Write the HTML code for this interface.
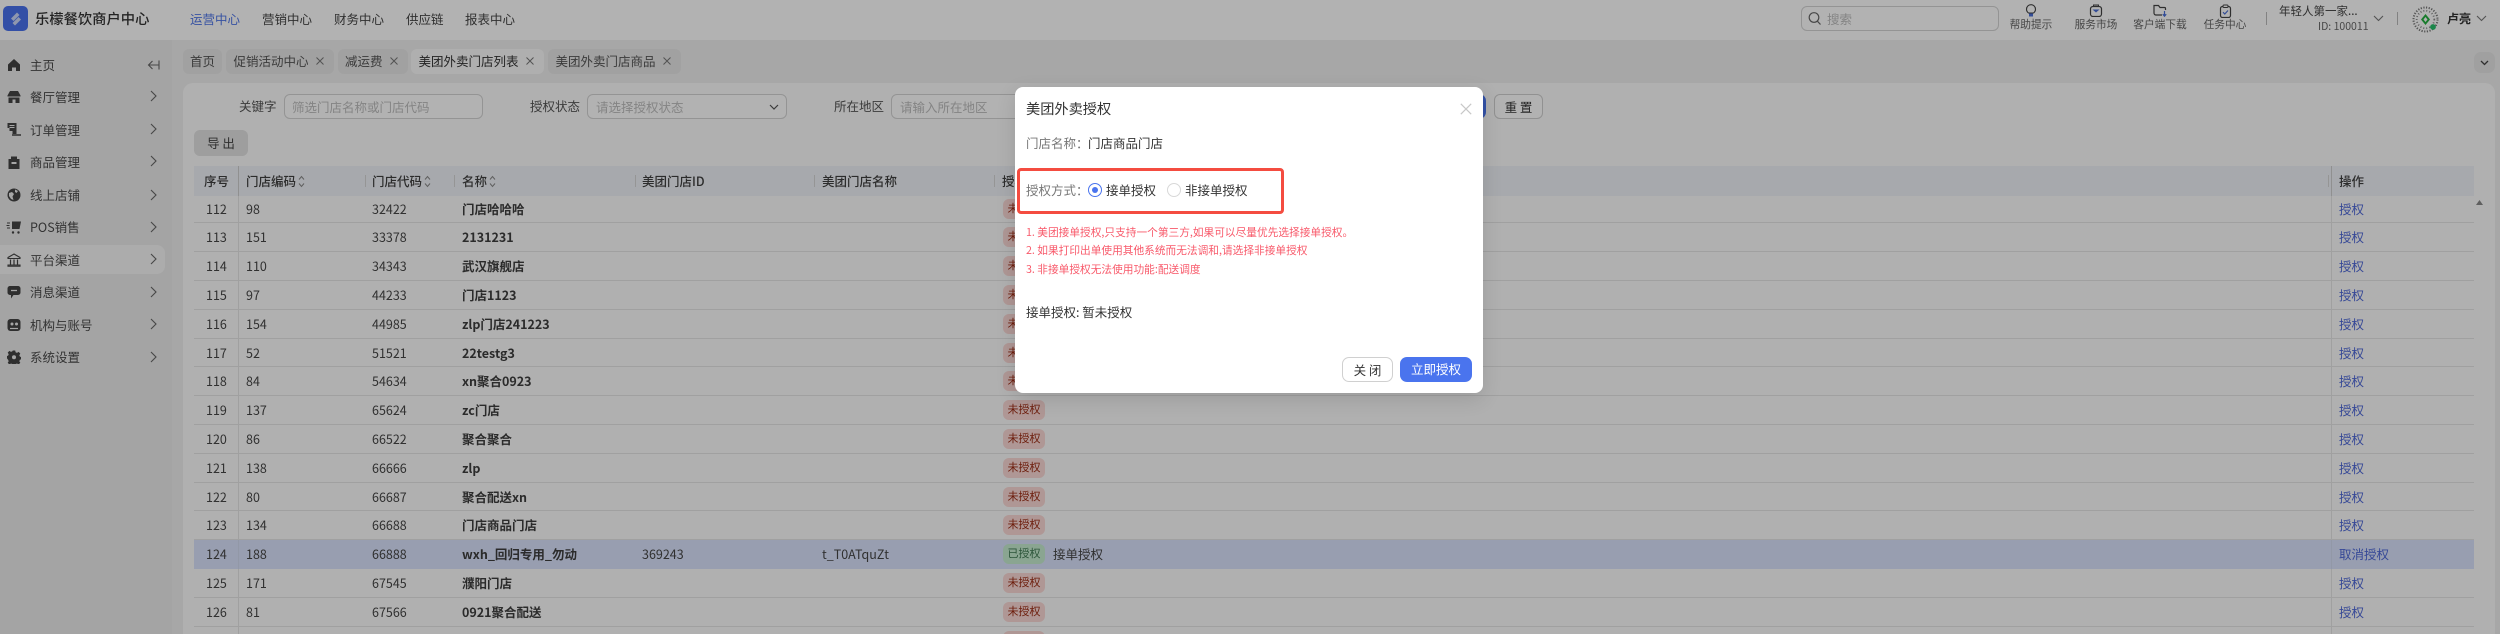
<!DOCTYPE html>
<html lang="zh-CN">
<head>
<meta charset="utf-8">
<title>美团外卖授权</title>
<style>
*{box-sizing:border-box;margin:0;padding:0}
html,body{width:2500px;height:634px;overflow:hidden;background:#f0f1f3;font-family:"Noto Sans CJK SC","Liberation Sans",sans-serif;font-size:12.5px;color:#454545}
#root{position:relative;width:2500px;height:634px;overflow:hidden;contain:paint}
.t{position:absolute;white-space:nowrap;line-height:18px}
#hd{position:absolute;left:0;top:0;width:2500px;height:40px;background:#fff}
#logo{position:absolute;left:3px;top:6px;width:25px;height:25px;border-radius:5px;background:#4a72ee}
#side{position:absolute;left:0;top:40px;width:172px;height:594px;background:#ebebeb}
#side .it{position:absolute;left:30px;white-space:nowrap;line-height:18px;color:#4a4a4a}
#side svg{position:absolute}
#act{position:absolute;left:0;top:205px;width:165px;height:29px;background:#f6f6f6;border-radius:0 8px 8px 0}
#main{position:absolute;left:172px;top:40px;width:2328px;height:594px;background:#f0f0f0}
.tab{position:absolute;top:49px;height:25px;border-radius:6px;background:#e7e7e7;line-height:24px;white-space:nowrap;color:#555}
.tab.on{background:#fbfbfb;color:#333}
.tab span{position:absolute;top:0}
.x{position:absolute;top:7px;width:10px;height:10px}
#card{position:absolute;left:183px;top:83px;width:2312px;height:551px;background:#fcfcfc;border-radius:10px 10px 0 0}
.inp{position:absolute;top:94px;height:25px;border:1px solid #d4d4d4;border-radius:6px;color:#bdbdbd;line-height:23px;padding-left:7px;white-space:nowrap;background:#fff}
#exp{position:absolute;left:194px;top:130px;width:54px;height:26px;border-radius:6px;background:#e2e2e2;text-align:center;line-height:25px;color:#444}
#thd{position:absolute;left:194px;top:166px;width:2280px;height:30px;background:#f0f3f8;font-weight:500;color:#404040}
#thd span{position:absolute;top:6px;line-height:18px;white-space:nowrap}
#thd em{position:absolute;top:9px;width:1px;height:12px;background:#d6d6d6}
#thd svg{position:absolute;top:9px}
#tb{position:absolute;left:194px;top:196px;width:2280px;height:438px;overflow:hidden}
.r{position:relative;height:28.8px;border-bottom:1px solid #e5e5e5;line-height:28px;white-space:nowrap}
.r:first-child{height:27.4px;line-height:25px}
.r>*{position:absolute;top:0;font-style:normal;text-decoration:none}
.r .n{left:12px}.r .b{left:52px}.r .c{left:178px}
.r b{left:268px;font-weight:700;color:#3e3e3e}
.r .tg{left:809px;top:4px;width:42px;height:20px;line-height:19px;border-radius:6px;background:#fbd9d6;color:#9c2a12;font-size:11px;text-align:center}
.r:first-child .tg{top:3px}
.r .op{left:2145px;color:#4f69d8}
.r:before,.r:after{content:"";position:absolute;top:0;bottom:-1px;width:1px;background:#e5e5e5}
.r:before{left:44px}.r:after{left:2137px}
.r.hi{background:#dae3fc;border-bottom-color:#dae3fc}
.r.hi:before,.r.hi:after{background:#d2daf0}
.r.hi .tg{background:#c6ecd0;color:#3f7a52}
#ov{position:absolute;left:0;top:0;width:2500px;height:634px;background:rgba(0,0,0,.3)}
#dlg{position:absolute;left:1015px;top:87px;width:468px;height:306px;background:#fff;border-radius:8px;box-shadow:0 6px 20px rgba(0,0,0,.12);color:#333}
#box{position:absolute;left:2px;top:81px;width:267px;height:46px;border:3px solid #f44c40;border-radius:4px}
.red{color:#f8596a;font-size:10.7px}
.btn{position:absolute;top:270px;height:25px;border-radius:7px;text-align:center;line-height:24px}
</style>
</head>
<body>
<div id="root">

<div id="hd">
  <div id="logo"><svg width="25" height="25" viewBox="0 0 25 25"><path d="M8 12.500 14 6.500 16.500 9 10.500 15z M9.500 17 15.500 11 18 13.500 12 19.500z" fill="#dbe4fb" opacity=".9"/></svg></div>
  <div class="t" style="left:35px;top:9px;font-size:14.3px;font-weight:500;color:#333;line-height:20px">乐檬餐饮商户中心</div>
  <div class="t" style="left:190px;top:10px;color:#4f76e8">运营中心</div>
  <div class="t" style="left:262px;top:10px">营销中心</div>
  <div class="t" style="left:334px;top:10px">财务中心</div>
  <div class="t" style="left:406px;top:10px">供应链</div>
  <div class="t" style="left:465px;top:10px">报表中心</div>

  <div class="inp" style="left:1801px;top:6px;width:198px;padding-left:25px;line-height:24px">搜索</div>
  <svg style="position:absolute;left:1808px;top:11px" width="14" height="15" viewBox="0 0 14 15"><circle cx="6" cy="6.500" r="4.800" fill="none" stroke="#666" stroke-width="1.200"/><path d="M9.500 10.300 12.500 13.500" stroke="#666" stroke-width="1.200"/></svg>

  <svg style="position:absolute;left:2024px;top:4px" width="14" height="13" viewBox="0 0 14 13"><path d="M4.500 9C3 7.800 2.500 6.600 2.500 5.200a4.500 4.500 0 0 1 9 0C11.500 6.600 11 7.800 9.500 9z" fill="none" stroke="#444" stroke-width="1.100"/><path d="M5 9.500h4v3H5z" fill="#4a6fd8"/></svg>
  <svg style="position:absolute;left:2089px;top:4px" width="14" height="13" viewBox="0 0 14 13"><rect x="1.500" y="2.500" width="11" height="10" rx="2.500" fill="none" stroke="#444" stroke-width="1.200"/><path d="M4.500 2.500V1h5v1.500" fill="none" stroke="#444"/><path d="M3.500 5.500h7L7 8.500z" fill="#4a6fd8"/></svg>
  <svg style="position:absolute;left:2153px;top:4px" width="15" height="13" viewBox="0 0 15 13"><path d="M9 11H3a2 2 0 0 1-2-2V1.500h4.500l1.500 2h4.500a1 1 0 0 1 1 1v1.500" fill="none" stroke="#444" stroke-width="1.200"/><path d="M11.500 7v5M9.800 10.200l1.700 2 1.700-2" fill="none" stroke="#4a6fd8" stroke-width="1.200"/></svg>
  <svg style="position:absolute;left:2219px;top:4px" width="13" height="14" viewBox="0 0 13 14"><rect x="1.500" y="2.500" width="10" height="11" rx="2" fill="none" stroke="#444" stroke-width="1.200"/><rect x="4" y="1" width="5" height="2.500" rx="1" fill="#fff" stroke="#444"/><path d="M4 8.200 5.800 10 9 6.500" fill="none" stroke="#4a6fd8" stroke-width="1.200"/></svg>
  <div class="t" style="left:1990px;width:82px;text-align:center;top:16px;font-size:10.7px;color:#666">帮助提示</div>
  <div class="t" style="left:2055px;width:82px;text-align:center;top:16px;font-size:10.7px;color:#666">服务市场</div>
  <div class="t" style="left:2119px;width:82px;text-align:center;top:16px;font-size:10.7px;color:#666">客户端下载</div>
  <div class="t" style="left:2184px;width:82px;text-align:center;top:16px;font-size:10.7px;color:#666">任务中心</div>

  <div style="position:absolute;left:2266px;top:12px;width:1px;height:13px;background:#bbb"></div>
  <div class="t" style="left:2279px;top:2px;font-size:11.5px;color:#444">年轻人第一家...</div>
  <div class="t" style="left:2318px;top:18px;font-size:10.5px;color:#666">ID: 100011</div>
  <svg style="position:absolute;left:2373px;top:15px" width="11" height="7" viewBox="0 0 11 7"><path d="M1 1l4.500 4.500L10 1" fill="none" stroke="#777" stroke-width="1.100"/></svg>
  <div style="position:absolute;left:2397px;top:12px;width:1px;height:13px;background:#bbb"></div>

  <svg style="position:absolute;left:2412px;top:6px" width="27" height="27" viewBox="0 0 27 27">
    <circle cx="13.500" cy="13.500" r="12" fill="none" stroke="#777" stroke-width="2" stroke-dasharray="1.200 1.500"/>
    <circle cx="13.500" cy="13.500" r="8.800" fill="none" stroke="#888" stroke-width="1.800" stroke-dasharray="1 2"/>
    <path d="M13.500 8 18 13.500 13.500 19 9 13.500z" fill="#25b040"/>
    <path d="M13.500 11 15.500 13.500 13.500 16 11.500 13.500z" fill="#fff"/>
    <circle cx="21" cy="21" r="2.900" fill="#27c06a"/>
  </svg>
  <div class="t" style="left:2447px;top:10px;font-size:12px;font-weight:700;color:#333">卢亮</div>
  <svg style="position:absolute;left:2476px;top:15px" width="11" height="7" viewBox="0 0 11 7"><path d="M1 1l4.500 4.500L10 1" fill="none" stroke="#777" stroke-width="1.100"/></svg>
</div>

<div id="main"></div>
<div id="side">
  <div id="act"></div>
  <svg style="left:7px;top:18px" width="14" height="14" viewBox="0 0 14 14"><path d="M7 1 13 6.500V13H9V9.500H5V13H1V6.500z" fill="#444"/></svg>
  <svg style="left:7px;top:50px" width="14" height="14" viewBox="0 0 14 14"><path d="M3 1h8l2.500 4.500v1H.5v-1z" fill="#444"/><path d="M1.500 7.500h11V13H8.500V9.500h-3V13h-4z" fill="#444"/></svg>
  <svg style="left:6px;top:82px" width="16" height="15" viewBox="0 0 16 15"><path d="M1.500 1h9v11h-4V9h-3V6h-2z" fill="#444"/><path d="M3.500 3.500h5M3.500 5.500h5" stroke="#eee" stroke-width="1"/><path d="M6 13h9" stroke="#444" stroke-width="1.500"/></svg>
  <svg style="left:7px;top:115px" width="14" height="15" viewBox="0 0 14 15"><path d="M4 4V1.500h6V4h2.500v10h-11V4z" fill="#444"/><path d="M4.500 7h5v2h-5z" fill="#eee"/></svg>
  <svg style="left:7px;top:148px" width="14" height="14" viewBox="0 0 14 14"><circle cx="7" cy="7" r="6.500" fill="#444"/><path d="M2 5 5 4 7 6 5.500 8.500 6.500 12 4 11 2 8zM8 1.500 11 3 9.500 5 8 4z" fill="#eee"/></svg>
  <svg style="left:6px;top:180px" width="16" height="15" viewBox="0 0 16 15"><path d="M6 1.500h9L13.500 9H6z" fill="#444"/><path d="M1 3h3M0.500 5.500h3M1 8h3" stroke="#444" stroke-width="1.100"/><circle cx="7" cy="12.500" r="1.200" fill="#444"/><circle cx="12.500" cy="12.500" r="1.200" fill="#444"/></svg>
  <svg style="left:7px;top:213px" width="14" height="14" viewBox="0 0 14 14"><path d="M7 1 13 4.500v1H1v-1zM1 12h12v1.200H1z" fill="none" stroke="#444" stroke-width="1.100"/><path d="M3.500 6.500v5M7 6.500v5M10.500 6.500v5" stroke="#444" stroke-width="1.200"/></svg>
  <svg style="left:7px;top:245px" width="14" height="15" viewBox="0 0 14 15"><path d="M3 1h8a2.500 2.500 0 0 1 2.500 2.500v4A2.500 2.500 0 0 1 11 10H6.500L4 13.500V10H3A2.500 2.500 0 0 1 .500 7.500v-4A2.500 2.500 0 0 1 3 1z" fill="#444"/><path d="M4 5.500h6" stroke="#eee" stroke-width="1.300"/></svg>
  <svg style="left:7px;top:278px" width="14" height="14" viewBox="0 0 14 14"><rect x=".5" y="1" width="13" height="12" rx="3" fill="#444"/><circle cx="5" cy="6" r="1.500" fill="#eee"/><circle cx="9.500" cy="6" r="1.500" fill="#eee"/><path d="M3 10.500h8" stroke="#eee" stroke-width="1.200"/></svg>
  <svg style="left:7px;top:310px" width="14" height="14" viewBox="0 0 14 14"><path d="M5.800.5h2.400l.4 1.800 1.400.6 1.600-1 1.700 1.700-1 1.600.6 1.400 1.100.4v2.400l-1.100.4-.6 1.400 1 1.600-1.700 1.700-1.600-1-1.400.6-.4 1.500H5.800l-.4-1.500-1.400-.6-1.600 1-1.700-1.700 1-1.600-.6-1.400L0 8.400V6l1.100-.4.600-1.400-1-1.600L2.400.9l1.600 1 1.400-.6z" fill="#444"/><circle cx="7" cy="7.200" r="2" fill="#eee"/></svg>

  <div class="it" style="top:16px">主页</div>
  <div class="it" style="top:48px">餐厅管理</div>
  <div class="it" style="top:81px">订单管理</div>
  <div class="it" style="top:113px">商品管理</div>
  <div class="it" style="top:146px">线上店铺</div>
  <div class="it" style="top:178px">POS销售</div>
  <div class="it" style="top:211px">平台渠道</div>
  <div class="it" style="top:243px">消息渠道</div>
  <div class="it" style="top:276px">机构与账号</div>
  <div class="it" style="top:308px">系统设置</div>

  <svg style="left:147px;top:19px" width="13" height="12" viewBox="0 0 13 12"><path d="M12 6H2M5.500 2 1.500 6l4 4M12 1.500v9" fill="none" stroke="#666" stroke-width="1.100"/></svg>
  <svg style="left:150px;top:50px" width="7" height="12" viewBox="0 0 7 12"><path d="M1 1l5 5-5 5" fill="none" stroke="#666" stroke-width="1.100"/></svg>
  <svg style="left:150px;top:83px" width="7" height="12" viewBox="0 0 7 12"><path d="M1 1l5 5-5 5" fill="none" stroke="#666" stroke-width="1.100"/></svg>
  <svg style="left:150px;top:115px" width="7" height="12" viewBox="0 0 7 12"><path d="M1 1l5 5-5 5" fill="none" stroke="#666" stroke-width="1.100"/></svg>
  <svg style="left:150px;top:149px" width="7" height="12" viewBox="0 0 7 12"><path d="M1 1l5 5-5 5" fill="none" stroke="#666" stroke-width="1.100"/></svg>
  <svg style="left:150px;top:181px" width="7" height="12" viewBox="0 0 7 12"><path d="M1 1l5 5-5 5" fill="none" stroke="#666" stroke-width="1.100"/></svg>
  <svg style="left:150px;top:213px" width="7" height="12" viewBox="0 0 7 12"><path d="M1 1l5 5-5 5" fill="none" stroke="#666" stroke-width="1.100"/></svg>
  <svg style="left:150px;top:246px" width="7" height="12" viewBox="0 0 7 12"><path d="M1 1l5 5-5 5" fill="none" stroke="#666" stroke-width="1.100"/></svg>
  <svg style="left:150px;top:278px" width="7" height="12" viewBox="0 0 7 12"><path d="M1 1l5 5-5 5" fill="none" stroke="#666" stroke-width="1.100"/></svg>
  <svg style="left:150px;top:311px" width="7" height="12" viewBox="0 0 7 12"><path d="M1 1l5 5-5 5" fill="none" stroke="#666" stroke-width="1.100"/></svg>
</div>

<div class="tab" style="left:183px;width:39px"><span style="left:7px">首页</span></div>
<div class="tab" style="left:226px;width:108px"><span style="left:7.500px">促销活动中心</span><svg class="x" style="left:89px" viewBox="0 0 10 10"><path d="M1.500 1.500l7 7M8.500 1.500l-7 7" stroke="#777"/></svg></div>
<div class="tab" style="left:338px;width:70px"><span style="left:7px">减运费</span><svg class="x" style="left:51px" viewBox="0 0 10 10"><path d="M1.500 1.500l7 7M8.500 1.500l-7 7" stroke="#777"/></svg></div>
<div class="tab on" style="left:411px;width:133px"><span style="left:7.500px">美团外卖门店列表</span><svg class="x" style="left:114px" viewBox="0 0 10 10"><path d="M1.500 1.500l7 7M8.500 1.500l-7 7" stroke="#777"/></svg></div>
<div class="tab" style="left:548px;width:133px"><span style="left:7.500px">美团外卖门店商品</span><svg class="x" style="left:114px" viewBox="0 0 10 10"><path d="M1.500 1.500l7 7M8.500 1.500l-7 7" stroke="#777"/></svg></div>
<div style="position:absolute;left:2474px;top:52px;width:21px;height:21px;border-radius:7px;background:#e5e5e5"></div>
<svg style="position:absolute;left:2480px;top:60px" width="9" height="6" viewBox="0 0 9 6"><path d="M1 1l3.500 3.500L8 1" fill="none" stroke="#444" stroke-width="1.300"/></svg>

<div id="card"></div>
<div class="t" style="left:239px;top:97px;color:#555">关键字</div>
<div class="inp" style="left:284px;width:199px">筛选门店名称或门店代码</div>
<div class="t" style="left:530px;top:97px;color:#555">授权状态</div>
<div class="inp" style="left:587px;width:200px;padding-left:8px">请选择授权状态</div>
<svg style="position:absolute;left:769px;top:104px" width="10" height="6" viewBox="0 0 10 6"><path d="M1 1l4 4 4-4" fill="none" stroke="#555" stroke-width="1.200"/></svg>
<div class="t" style="left:834px;top:97px;color:#555">所在地区</div>
<div class="inp" style="left:891px;width:200px;padding-left:8px">请输入所在地区</div>
<div style="position:absolute;left:1440px;top:94px;width:46px;height:25px;border-radius:7px;background:#4a74ee"></div>
<div style="position:absolute;left:1494px;top:94px;width:49px;height:25px;border-radius:6px;border:1px solid #d0d0d0;background:#fff;text-align:center;line-height:23px;color:#333">重 置</div>
<div id="exp">导 出</div>

<div id="thd">
  <span style="left:10px">序号</span>
  <div style="position:absolute;left:44px;top:0;width:1px;height:30px;background:#cfcfcf"></div>
  <span style="left:52px">门店编码</span><svg style="left:104px" width="7" height="13" viewBox="0 0 7 13"><path d="M1 4.500 3.500 1.500 6 4.500M1 8.500l2.500 3 2.500-3" fill="none" stroke="#888"/></svg>
  <em style="left:171px"></em>
  <span style="left:178px">门店代码</span><svg style="left:230px" width="7" height="13" viewBox="0 0 7 13"><path d="M1 4.500 3.500 1.500 6 4.500M1 8.500l2.500 3 2.500-3" fill="none" stroke="#888"/></svg>
  <em style="left:260px"></em>
  <span style="left:268px">名称</span><svg style="left:295px" width="7" height="13" viewBox="0 0 7 13"><path d="M1 4.500 3.500 1.500 6 4.500M1 8.500l2.500 3 2.500-3" fill="none" stroke="#888"/></svg>
  <em style="left:441px"></em>
  <span style="left:448px">美团门店ID</span>
  <em style="left:620px"></em>
  <span style="left:628px">美团门店名称</span>
  <em style="left:800px"></em>
  <span style="left:808px">授权状态</span>
  <em style="left:2134px"></em>
  <div style="position:absolute;left:2137px;top:0;width:1px;height:30px;background:#cfcfcf"></div>
  <span style="left:2145px">操作</span>
</div>

<div id="tb">
<div class="r"><i class="n">112</i><i class="b">98</i><i class="c">32422</i><b>门店哈哈哈</b><i class="tg">未授权</i><a class="op">授权</a></div>
<div class="r"><i class="n">113</i><i class="b">151</i><i class="c">33378</i><b>2131231</b><i class="tg">未授权</i><a class="op">授权</a></div>
<div class="r"><i class="n">114</i><i class="b">110</i><i class="c">34343</i><b>武汉旗舰店</b><i class="tg">未授权</i><a class="op">授权</a></div>
<div class="r"><i class="n">115</i><i class="b">97</i><i class="c">44233</i><b>门店1123</b><i class="tg">未授权</i><a class="op">授权</a></div>
<div class="r"><i class="n">116</i><i class="b">154</i><i class="c">44985</i><b>zlp门店241223</b><i class="tg">未授权</i><a class="op">授权</a></div>
<div class="r"><i class="n">117</i><i class="b">52</i><i class="c">51521</i><b>22testg3</b><i class="tg">未授权</i><a class="op">授权</a></div>
<div class="r"><i class="n">118</i><i class="b">84</i><i class="c">54634</i><b>xn聚合0923</b><i class="tg">未授权</i><a class="op">授权</a></div>
<div class="r"><i class="n">119</i><i class="b">137</i><i class="c">65624</i><b>zc门店</b><i class="tg">未授权</i><a class="op">授权</a></div>
<div class="r"><i class="n">120</i><i class="b">86</i><i class="c">66522</i><b>聚合聚合</b><i class="tg">未授权</i><a class="op">授权</a></div>
<div class="r"><i class="n">121</i><i class="b">138</i><i class="c">66666</i><b>zlp</b><i class="tg">未授权</i><a class="op">授权</a></div>
<div class="r"><i class="n">122</i><i class="b">80</i><i class="c">66687</i><b>聚合配送xn</b><i class="tg">未授权</i><a class="op">授权</a></div>
<div class="r"><i class="n">123</i><i class="b">134</i><i class="c">66688</i><b>门店商品门店</b><i class="tg">未授权</i><a class="op">授权</a></div>
<div class="r hi"><i class="n">124</i><i class="b">188</i><i class="c">66888</i><b>wxh_回归专用_勿动</b><i style="left:448px">369243</i><i style="left:628px">t_T0ATquZt</i><i class="tg">已授权</i><i style="left:859px">接单授权</i><a class="op">取消授权</a></div>
<div class="r"><i class="n">125</i><i class="b">171</i><i class="c">67545</i><b>濮阳门店</b><i class="tg">未授权</i><a class="op">授权</a></div>
<div class="r"><i class="n">126</i><i class="b">81</i><i class="c">67566</i><b>0921聚合配送</b><i class="tg">未授权</i><a class="op">授权</a></div>
<div class="r"><i class="tg">未授权</i></div>
</div>
<svg style="position:absolute;left:2476px;top:200px" width="7" height="5" viewBox="0 0 7 5"><path d="M3.500 0 7 5H0z" fill="#888"/></svg>

<div id="ov"></div>

<div id="dlg">
  <div class="t" style="left:11px;top:12px;font-size:14.2px;line-height:20px;color:#333">美团外卖授权</div>
  <svg style="position:absolute;left:445px;top:16px" width="12" height="12" viewBox="0 0 12 12"><path d="M.8.8l10.400 10.400M11.200.8.800 11.200" stroke="#c8c8c8" stroke-width="1.200"/></svg>
  <div class="t" style="left:11px;top:47px;color:#777">门店名称：</div>
  <div class="t" style="left:73px;top:47px;color:#333">门店商品门店</div>
  <div id="box"></div>
  <div class="t" style="left:11px;top:94px;color:#777">授权方式：</div>
  <div style="position:absolute;left:73px;top:96px;width:14px;height:14px;border:1.500px solid #4a74ee;border-radius:50%"></div>
  <div style="position:absolute;left:77px;top:100px;width:6px;height:6px;background:#4a74ee;border-radius:50%"></div>
  <div class="t" style="left:91px;top:94px;color:#333">接单授权</div>
  <div style="position:absolute;left:152px;top:96px;width:14px;height:14px;border:1px solid #d8d8d8;border-radius:50%"></div>
  <div class="t" style="left:170px;top:94px;color:#333">非接单授权</div>
  <div class="t red" style="left:11px;top:137px">1. 美团接单授权,只支持一个第三方,如果可以尽量优先选择接单授权。</div>
  <div class="t red" style="left:11px;top:155px">2. 如果打印出单使用其他系统而无法调和,请选择非接单授权</div>
  <div class="t red" style="left:11px;top:173.500px">3. 非接单授权无法使用功能:配送调度</div>
  <div class="t" style="left:11px;top:216px;color:#333">接单授权: 暂未授权</div>
  <div class="btn" style="left:327px;width:51px;border:1px solid #d0d0d0;line-height:23px;color:#333">关 闭</div>
  <div class="btn" style="left:385px;width:72px;background:#4a74ee;color:#fff">立即授权</div>
</div>

</div>
</body>
</html>
